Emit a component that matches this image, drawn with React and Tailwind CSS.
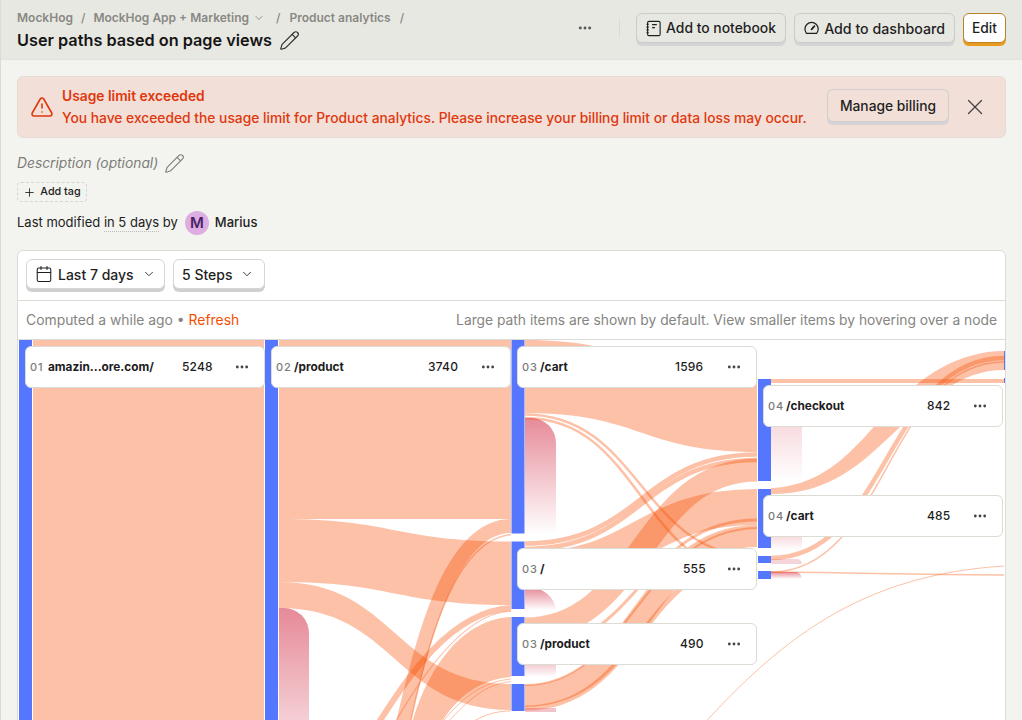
import React from "react";
import { Pencil, TriangleAlert, X, Calendar, ChevronDown, Plus, Ellipsis } from "lucide-react";

const FONT = "font-['Inter','Liberation_Sans',sans-serif]";
const LINK = "#f54e00";

function NotebookIcon() {
  return (
    <svg width="16" height="17" viewBox="0 0 16 17" fill="none" stroke="currentColor" strokeWidth="1.2">
      <rect x="1.7" y="1" width="13.3" height="15" rx="1.5" />
      <path d="M0.5 4h2.4M0.5 7h2.4M0.5 10h2.4M0.5 13h2.4" />
      <path d="M6.5 4.5h5M6.5 7.5h3" strokeWidth="1.3" />
    </svg>
  );
}

function GaugeIcon() {
  return (
    <svg width="16" height="14" viewBox="0 0 16 14" fill="none" stroke="currentColor" strokeWidth="1.3" strokeLinecap="round">
      <path d="M2.6 12.6 A7 7 0 1 1 13.4 12.6 Z" strokeLinejoin="round" />
      <path d="M8 8.5 L11 5" strokeWidth="1.8" />
    </svg>
  );
}

function ActionButton({ icon, children, className, textClass }) {
  return (
    <button className={`flex h-[30px] items-center gap-[5px] whitespace-nowrap rounded-[6px] border border-[#cbcbc7] bg-[#e8e8e3] px-[9px] font-medium text-[#1f1f1f] shadow-[0_3px_0_0_#d6d3d6] ${className || ""}`}>
      {icon}
      <span className={`pt-[1px] ${textClass}`}>{children}</span>
    </button>
  );
}

function Dropdown({ icon, label, className }) {
  return (
    <button className={`flex h-[30px] items-center rounded-[6px] border border-[#d6d6d2] bg-white text-[14px] font-medium text-[#1f1f1f] shadow-[0_3px_0_0_#cfcfcf] ${className}`}>
      {icon}
      <span>{label}</span>
      <ChevronDown size={14} strokeWidth={1.6} className="ml-[8px] text-[#333]" />
    </button>
  );
}

function Node({ pos, step, label, count, countClass }) {
  return (
    <div className={`absolute flex h-[42px] w-[240px] items-center rounded-[6px] border border-[#dcdcd5] bg-white ${pos}`}>
      <span className="ml-[4px] w-[18px] text-[11px] font-medium tracking-[0.8px] text-[#7b7b78]">{step}</span>
      <span className="pt-[1px] text-[11.8px] font-bold text-[#1d1d1d]">{label}</span>
      <span className={`absolute text-[12px] font-medium tracking-[0.2px] text-[#1d1d1d] ${countClass}`}>{count}</span>
      <Ellipsis size={16} strokeWidth={2.2} className="absolute left-[208px] text-[#444]" />
    </div>
  );
}

function Sankey() {
  const blue = "#5577ff";
  return (
    <svg className="absolute left-0 top-0" width="988" height="400" viewBox="18 340 988 400" fill="none">
      <defs>
        <linearGradient id="drop" x1="0" y1="0" x2="0" y2="1">
          <stop offset="0" stopColor="#e68a98" />
          <stop offset="1" stopColor="#e68a98" stopOpacity="0" />
        </linearGradient>
        <linearGradient id="dropPale" x1="0" y1="0" x2="0" y2="1">
          <stop offset="0" stopColor="#eeb9c2" />
          <stop offset="1" stopColor="#eeb9c2" stopOpacity="0" />
        </linearGradient>
        <linearGradient id="dropFaint" x1="0" y1="0" x2="0" y2="1">
          <stop offset="0" stopColor="#e68a98" stopOpacity="0.3" />
          <stop offset="1" stopColor="#e68a98" stopOpacity="0" />
        </linearGradient>
      </defs>

      {/* drop-offs */}
      <path d="M279 608 h5 a25 25 0 0 1 25 25 V800 H279 Z" fill="url(#drop)" />
      <path d="M525 418 h6 a25 25 0 0 1 25 25 V534 H525 Z" fill="url(#drop)" />
      <path d="M525 588 h6 a25 25 0 0 1 25 22 V610 H525 Z" fill="url(#drop)" />
      <rect x="525" y="660" width="31" height="17" fill="url(#dropPale)" />
      <rect x="525" y="708" width="31" height="4" fill="#f3c3cb" />
      <rect x="771" y="427" width="31" height="54" fill="url(#dropFaint)" />
      <rect x="771" y="537" width="31" height="13" fill="url(#dropFaint)" />
      <path d="M771 559 h26 a5 5 0 0 1 5 5 H771 Z" fill="#f5d5da" />
      <path d="M771 572 h24 a7 7 0 0 1 7 7 H771 Z" fill="url(#drop)" />

      {/* links */}
      <g fill={LINK} fillOpacity="0.35">
        <rect x="33" y="340" width="231" height="400" />
        <rect x="279" y="340" width="232" height="179" />
        <path d="M279 519 C395 519 395 541.5 511 541.5 L511 605 C395 605 395 582 279 582 Z" />
        <path d="M279 582 C395 582 395 684 511 684 L511 710 C395 710 395 608 279 608 Z" />
        <path d="M413 720 C425 680 455 620 511 617 L511 677 C480 680 460 695 443 720 Z" />
        <path d="M525 340 C641 340 641 379 757 379 L757 452 C641 452 641 413 525 413 Z" />
        <rect x="771" y="379" width="233" height="4" />
        <path d="M771 488 C830 486 860 440 885 415 C920 375 960 351 1004 351 L1004 370 C960 370 930 400 900 427 C860 465 830 494 771 494 Z" />
      </g>
      <g stroke={LINK} strokeOpacity="0.35">
        <path d="M395 760 C420 640 450 526 511 526" strokeWidth="14" />
        <path d="M405 750 C430 620 460 540 511 534.5" strokeWidth="1.5" />
        <path d="M372 733 C400 690 445 612 511 608" strokeWidth="6" />
        <path d="M392 728 C430 660 470 612 511 611.5" strokeWidth="1.2" />
        <path d="M440 725 C460 700 480 682 511 679" strokeWidth="1" />
        <path d="M445 725 C465 705 480 685 511 681.5" strokeWidth="1" />
        <path d="M472 722 C485 715 495 711 511 711" strokeWidth="1" />
        <path d="M525 414.5 C641 414.5 641 556 757 556" strokeWidth="2.5" />
        <path d="M525 418 C641 418 641 574 757 574" strokeWidth="2.5" />
        <path d="M525 543.5 C641 543.5 641 454.5 757 454.5" strokeWidth="4.5" />
        <path d="M525 549 C641 549 641 460 757 460" strokeWidth="4.5" />
        <path d="M525 629 C641 629 641 470 757 470" strokeWidth="23" />
        <path d="M525 570 C641 570 641 507 757 507" strokeWidth="36" />
        <path d="M525 696 C641 696 641 536 757 536" strokeWidth="22" />
        <path d="M525 650 C641 650 641 520 757 520" strokeWidth="3" />
        <path d="M525 685 C630 685 641 530 757 528" strokeWidth="2" />
        <path d="M525 708 C641 708 641 559 757 559" strokeWidth="5" />
        <path d="M771 558 C887 558 887 358 1004 358" strokeWidth="4.5" />
        <path d="M771 572 C887 572 887 362 1004 362" strokeWidth="1.5" />
        <path d="M771 572 C880 573 900 575 1004 575" strokeWidth="1.5" />
        <path d="M700 728 C780 640 860 575 1004 566" strokeWidth="1" />
      </g>

      {/* nodes */}
      <g fill={blue}>
        <rect x="19" y="340" width="13" height="400" />
        <rect x="265" y="340" width="13" height="400" />
        <rect x="511.5" y="340" width="13" height="193.5" />
        <rect x="511.5" y="541.5" width="13" height="67.5" />
        <rect x="511.5" y="617" width="13" height="59" />
        <rect x="511.5" y="684" width="13" height="27" />
        <rect x="758" y="379" width="13" height="102" />
        <rect x="758" y="489" width="13" height="59" />
        <rect x="758" y="556" width="13" height="7" />
        <rect x="758" y="571" width="13" height="8" />
        <rect x="1004" y="351" width="1.5" height="19" />
        <rect x="1004" y="378" width="1.5" height="5" />
      </g>
    </svg>
  );
}

export default function App() {
  return (
    <div className={`${FONT} h-[720px] w-full overflow-hidden border-l border-[#dcdcd5] bg-[#f3f4ef] text-[#1d1d1d]`}>
      <header className="flex h-[60px] items-start border-b border-[#e3e3dd] bg-[#e8e8e3] pl-[16px] pr-[16px]">
        <div className="flex-1 pt-[9px]">
          <div className="flex h-[17px] items-center text-[12px] font-semibold text-[#888884]">
            <span>MockHog</span>
            <span className="mx-[8px] font-medium">/</span>
            <span>MockHog App + Marketing</span>
            <ChevronDown size={12} strokeWidth={1.8} className="ml-[4px]" />
            <span className="ml-[11px] mr-[9px] font-medium">/</span>
            <span>Product analytics</span>
            <span className="ml-[9px] font-medium">/</span>
          </div>
          <div className="mt-[1px] flex items-center text-[16.25px] font-semibold leading-[26px] text-[#151515]">
            <span>User paths based on page views</span>
            <Pencil size={21} strokeWidth={1.4} className="ml-[7px] text-[#333]" />
          </div>
        </div>
        <div className="flex items-center pt-[13px]">
          <Ellipsis size={16} strokeWidth={2.4} className="text-[#555]" />
          <div className="ml-[26px] mr-[16px] h-[18px] w-px bg-[#d9d9d4]" />
          <ActionButton icon={<NotebookIcon />} className="w-[150px]" textClass="text-[13.9px]">Add to notebook</ActionButton>
          <ActionButton icon={<GaugeIcon />} className="ml-[8px] w-[161px]" textClass="text-[14.2px]">Add to dashboard</ActionButton>
          <button className="ml-[8px] h-[30px] w-[43px] rounded-[6px] border border-[#b7832a] bg-white pt-[1px] text-[13.8px] font-medium text-[#1f1f1f] shadow-[0_3px_0_0_#e89a1e]">Edit</button>
        </div>
      </header>

      <main className="pl-[16px] pr-[16px] pt-[16px]">
        <div className="flex h-[62px] items-center rounded-[6px] border border-[#e6dcd5] bg-[#f1dfd8] pl-[12px]">
          <TriangleAlert size={24} strokeWidth={1.6} className="text-[#e0380d]" />
          <div className="ml-[8px] flex-1 text-[13.8px] font-medium leading-[22px] text-[#e0380d]">
            <div className="font-semibold">Usage limit exceeded</div>
            <div>You have exceeded the usage limit for Product analytics. Please increase your billing limit or data loss may occur.</div>
          </div>
          <button className="mb-[3px] h-[33px] w-[122px] rounded-[6px] border border-[#cfcfcf] bg-[#f1dfd8] pt-[1px] text-[13.8px] font-medium text-[#1f1f1f] shadow-[0_3px_0_0_#d6d3d6]">Manage billing</button>
          <X size={26} strokeWidth={1.2} className="ml-[13px] mr-[17px] text-[#444]" />
        </div>

        <div className="mt-[13px] flex h-[24px] items-center text-[13.8px] italic text-[#7d7d79]">
          <span>Description (optional)</span>
          <Pencil size={21} strokeWidth={1.3} className="ml-[6px]" />
        </div>

        <div className="mt-[7px] flex h-[20px] w-[70px] items-center justify-center gap-[4px] rounded-[4px] border border-dashed border-[#d6d6d0] text-[10.8px] font-medium text-[#222]">
          <Plus size={13} strokeWidth={1.6} />
          <span>Add tag</span>
        </div>

        <div className="mt-[9px] flex h-[24px] items-center text-[13px] text-[#222]">
          <span>Last modified&nbsp;</span>
          <span className="border-b border-dotted border-[#bbb] leading-[17px]">in 5 days</span>
          <span>&nbsp;by</span>
          <span className="ml-[7px] flex h-[24px] w-[24px] items-center justify-center rounded-full bg-[#dcaee2] text-[15px] font-semibold text-[#4a2465]">M</span>
          <span className="ml-[6px] font-medium">Marius</span>
        </div>

        <section className="mt-[15px] rounded-[6px] border border-[#dcdcd5] bg-white">
          <div className="flex h-[50px] items-start gap-[8px] border-b border-[#dcdcd5] pl-[8px] pt-[8px]">
            <Dropdown icon={<Calendar size={18} strokeWidth={1.4} className="mr-[5px]" />} label="Last 7 days" className="w-[139px] pl-[8px]" />
            <Dropdown label="5 Steps" className="w-[92px] pl-[8px]" />
          </div>
          <div className="flex h-[39px] items-center justify-between border-b border-[#dcdcd5] px-[8px] text-[13.8px] text-[#858581]">
            <div className="text-[13.9px]">
              Computed a while ago • <span className="text-[#f54e00]">Refresh</span>
            </div>
            <div>Large path items are shown by default. View smaller items by hovering over a node</div>
          </div>
          <div className="relative h-[500px] overflow-hidden">
            <Sankey />
            <Node pos="left-[7px] top-[6px]" step="01" label="amazin...ore.com/" count="5248" countClass="left-[156px]" />
            <Node pos="left-[253px] top-[6px]" step="02" label="/product" count="3740" countClass="left-[156px]" />
            <Node pos="left-[499px] top-[6px]" step="03" label="/cart" count="1596" countClass="left-[157px]" />
            <Node pos="left-[745px] top-[45px]" step="04" label="/checkout" count="842" countClass="left-[163px]" />
            <Node pos="left-[745px] top-[155px]" step="04" label="/cart" count="485" countClass="left-[163px]" />
            <Node pos="left-[499px] top-[208px]" step="03" label="/" count="555" countClass="left-[165px]" />
            <Node pos="left-[499px] top-[283px]" step="03" label="/product" count="490" countClass="left-[162px]" />
          </div>
        </section>
      </main>
    </div>
  );
}
